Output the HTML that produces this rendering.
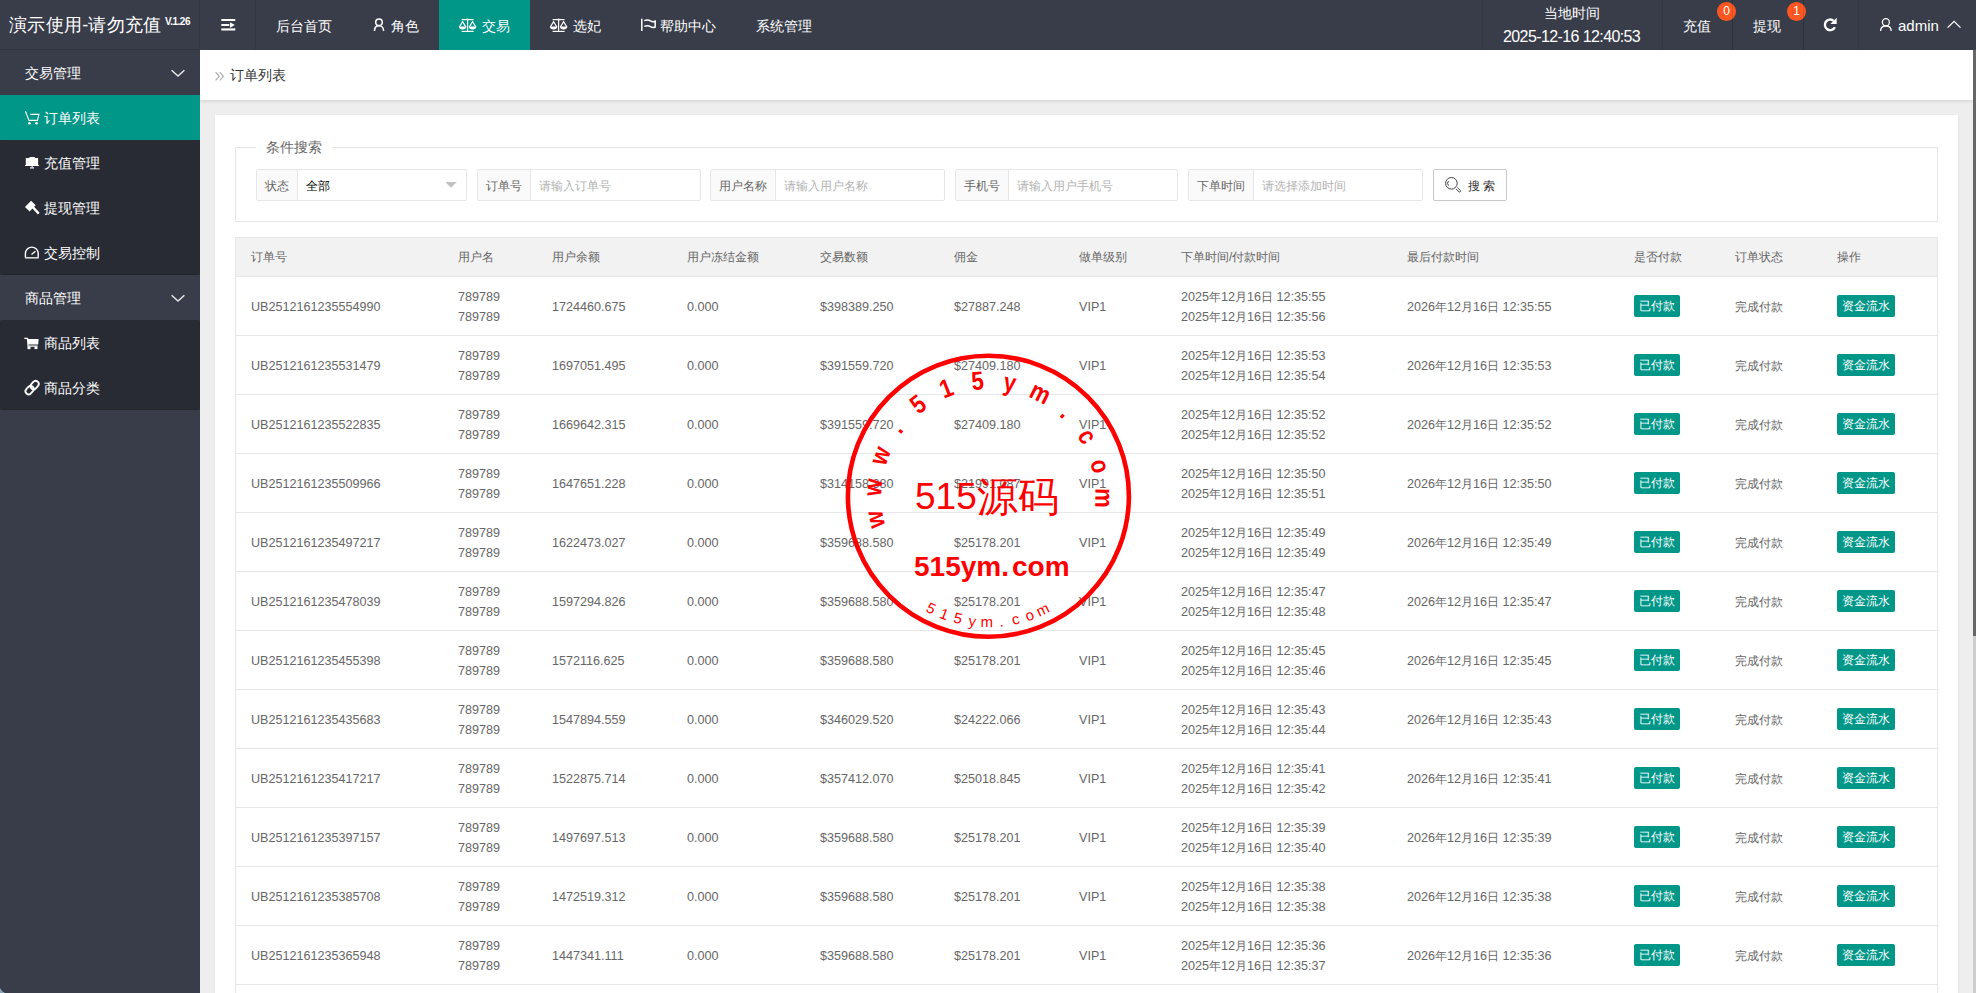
<!DOCTYPE html><html><head><meta charset="utf-8"><title>订单列表</title><style>*{margin:0;padding:0;box-sizing:border-box}
html,body{width:1976px;height:993px;overflow:hidden;background:#eeeeee;font-family:"Liberation Sans",sans-serif;color:#666}
.abs{position:absolute}
.hdr{position:absolute;left:0;top:0;width:1976px;height:50px;background:#393D49}
.logo-line{position:absolute;left:0;top:49px;width:200px;height:1px;background:#32363f}
.sep{position:absolute;top:0;width:1px;height:50px;background:#33373f}
.htxt{position:absolute;top:1px;line-height:50px;font-size:14px;color:#fff;white-space:nowrap}
.side{position:absolute;left:0;top:50px;width:200px;height:943px;background:#393D49}
.sub{position:absolute;left:0;width:200px;background:#282B33;border-radius:2px;box-shadow:inset 0 -1px 1px rgba(0,0,0,.08)}
.nav{position:absolute;left:0;width:200px;height:45px;line-height:45px;font-size:14px;color:#fff;white-space:nowrap}
.nav .t{position:absolute;left:44px;top:1px}
.nav.p .t{left:25px}
.main{position:absolute;left:200px;top:50px;width:1773px;height:943px;background:#eeeeee}
.crumb{position:absolute;left:200px;top:50px;width:1773px;height:50px;background:#fff;box-shadow:0 1px 4px rgba(0,0,0,.13)}
.card{position:absolute;left:215px;top:115px;width:1743px;height:900px;background:#fff;box-shadow:0 1px 3px 0 rgba(0,0,0,.07)}
.sbtrack{position:absolute;left:1973px;top:50px;width:3px;height:943px;background:#cccccc}
.sbthumb{position:absolute;left:1973px;top:50px;width:3px;height:586px;background:#666666}
.fs{position:absolute;left:235px;top:147px;width:1703px;height:75px;border:1px solid #e6e6e6}
.legend{position:absolute;left:256px;top:137px;padding:0 10px;background:#fff;font-size:14px;line-height:20px;color:#666}
.ig{position:absolute;top:169px;height:32px;border:1px solid #e6e6e6;border-radius:2px;background:#fff;font-size:12px;white-space:nowrap}
.ig .lb{position:absolute;left:0;top:0;height:30px;line-height:32px;padding:0 8px;background:#fafafa;border-right:1px solid #e6e6e6;color:#666}
.ig .ph{position:absolute;top:0;line-height:32px;color:#b3b3b3}
.btn{position:absolute;left:1433px;top:169px;width:74px;height:32px;border:1px solid #c9c9c9;border-radius:2px;background:#fff;font-size:12px;color:#555}
.tbl{position:static}
.thead{position:absolute;left:235px;top:237px;width:1703px;height:40px;background:#f2f2f2;border:1px solid #e6e6e6}
.th{position:absolute;top:0;line-height:38px;font-size:12px;color:#666;white-space:nowrap}
.tr{position:absolute;left:235px;width:1703px;height:59px;border:1px solid #e6e6e6;border-top:0;background:#fff}
.td{position:absolute;top:1px;line-height:58px;font-size:12px;color:#666;white-space:nowrap}
.td.n{font-size:12.6px}
.td.two{line-height:20px;top:10px}
.badge{position:absolute;top:18px;height:22px;line-height:22px;padding:0 5px;background:#009688;color:#fff;border-radius:2px;font-size:12px;white-space:nowrap}

.td i{font-style:normal;font-size:12px}
</style></head><body>
<div class="main"></div>
<div class="crumb"></div>
<svg class="abs" style="left:214px;top:70px" width="12" height="12" viewBox="214 70 12 12"><polyline points="215.6,72.2 219.2,76.3 215.6,80.4" fill="none" stroke="#aaa" stroke-width="1.1"/><polyline points="219.8,72.2 223.4,76.3 219.8,80.4" fill="none" stroke="#aaa" stroke-width="1.1"/></svg>
<div class="abs" style="left:230px;top:63px;line-height:24px;font-size:14px;color:#333">订单列表</div>
<div class="card"></div>
<div class="sbtrack"></div><div class="sbthumb"></div>

<div class="hdr"></div>
<div class="logo-line"></div>
<div class="sep" style="left:199px"></div>
<div class="sep" style="left:255px"></div>
<div class="htxt" style="left:9px;top:0;font-size:18px;letter-spacing:0.3px">演示使用-请勿充值</div>
<div class="htxt" style="left:165px;top:15.5px;line-height:12px;font-size:10px;font-weight:bold;letter-spacing:-0.5px">V.1.26</div>
<div class="abs" style="left:439px;top:0;width:91px;height:50px;background:#009688"></div>
<div class="htxt" style="left:276px">后台首页</div>
<div class="htxt" style="left:391px">角色</div>
<div class="htxt" style="left:482px">交易</div>
<div class="htxt" style="left:573px">选妃</div>
<div class="htxt" style="left:660px">帮助中心</div>
<div class="htxt" style="left:756px">系统管理</div>
<div class="sep" style="left:1482px"></div>
<div class="sep" style="left:1662px"></div>
<div class="sep" style="left:1732px"></div>
<div class="sep" style="left:1803px"></div>
<div class="sep" style="left:1858px"></div>
<div class="htxt" style="left:1544px;top:3px;line-height:20px">当地时间</div>
<div class="htxt" style="left:1503px;top:26.5px;line-height:20px;font-size:16px;letter-spacing:-0.6px">2025-12-16 12:40:53</div>
<div class="htxt" style="left:1683px">充值</div>
<div class="htxt" style="left:1753px">提现</div>
<div class="htxt" style="left:1898px;font-size:15px;top:1px">admin</div>

<div class="side"></div>
<div class="sub" style="top:95px;height:180px"></div>
<div class="sub" style="top:320px;height:90px"></div>
<div class="nav p" style="top:50px"><span class="t">交易管理</span></div>
<div class="nav" style="top:95px;background:#009688"><span class="t">订单列表</span></div>
<div class="nav" style="top:140px"><span class="t">充值管理</span></div>
<div class="nav" style="top:185px"><span class="t">提现管理</span></div>
<div class="nav" style="top:230px"><span class="t">交易控制</span></div>
<div class="nav p" style="top:275px"><span class="t">商品管理</span></div>
<div class="nav" style="top:320px"><span class="t">商品列表</span></div>
<div class="nav" style="top:365px"><span class="t">商品分类</span></div>

<div class="fs"></div>
<div class="legend">条件搜索</div>
<div class="ig" style="left:256px;width:211px"><span class="lb">状态</span><span class="ph" style="left:49px;color:#000">全部</span></div>
<div class="ig" style="left:477px;width:224px"><span class="lb">订单号</span><span class="ph" style="left:61px">请输入订单号</span></div>
<div class="ig" style="left:710px;width:235px"><span class="lb">用户名称</span><span class="ph" style="left:73px">请输入用户名称</span></div>
<div class="ig" style="left:955px;width:223px"><span class="lb">手机号</span><span class="ph" style="left:61px">请输入用户手机号</span></div>
<div class="ig" style="left:1188px;width:235px"><span class="lb">下单时间</span><span class="ph" style="left:73px">请选择添加时间</span></div>
<div class="btn"><span class="abs" style="left:34px;top:1px;line-height:30px;color:#333">搜 索</span></div>

<div class="tbl"><div class="thead"><span class="th" style="left:15px">订单号</span><span class="th" style="left:222px">用户名</span><span class="th" style="left:316px">用户余额</span><span class="th" style="left:451px">用户冻结金额</span><span class="th" style="left:584px">交易数额</span><span class="th" style="left:718px">佣金</span><span class="th" style="left:843px">做单级别</span><span class="th" style="left:945px">下单时间/付款时间</span><span class="th" style="left:1171px">最后付款时间</span><span class="th" style="left:1398px">是否付款</span><span class="th" style="left:1499px">订单状态</span><span class="th" style="left:1601px">操作</span></div><div class="tr" style="top:277px"><span class="td n" style="left:15px">UB2512161235554990</span><span class="td n two" style="left:222px">789789<br>789789</span><span class="td n" style="left:316px">1724460.675</span><span class="td n" style="left:451px">0.000</span><span class="td n" style="left:584px">$398389.250</span><span class="td n" style="left:718px">$27887.248</span><span class="td n" style="left:843px">VIP1</span><span class="td n two" style="left:945px">2025<i>年</i>12<i>月</i>16<i>日</i> 12:35:55<br>2025<i>年</i>12<i>月</i>16<i>日</i> 12:35:56</span><span class="td n" style="left:1171px">2026<i>年</i>12<i>月</i>16<i>日</i> 12:35:55</span><span class="badge" style="left:1398px">已付款</span><span class="td c" style="left:1499px">完成付款</span><span class="badge b2" style="left:1601px">资金流水</span></div><div class="tr" style="top:336px"><span class="td n" style="left:15px">UB2512161235531479</span><span class="td n two" style="left:222px">789789<br>789789</span><span class="td n" style="left:316px">1697051.495</span><span class="td n" style="left:451px">0.000</span><span class="td n" style="left:584px">$391559.720</span><span class="td n" style="left:718px">$27409.180</span><span class="td n" style="left:843px">VIP1</span><span class="td n two" style="left:945px">2025<i>年</i>12<i>月</i>16<i>日</i> 12:35:53<br>2025<i>年</i>12<i>月</i>16<i>日</i> 12:35:54</span><span class="td n" style="left:1171px">2026<i>年</i>12<i>月</i>16<i>日</i> 12:35:53</span><span class="badge" style="left:1398px">已付款</span><span class="td c" style="left:1499px">完成付款</span><span class="badge b2" style="left:1601px">资金流水</span></div><div class="tr" style="top:395px"><span class="td n" style="left:15px">UB2512161235522835</span><span class="td n two" style="left:222px">789789<br>789789</span><span class="td n" style="left:316px">1669642.315</span><span class="td n" style="left:451px">0.000</span><span class="td n" style="left:584px">$391559.720</span><span class="td n" style="left:718px">$27409.180</span><span class="td n" style="left:843px">VIP1</span><span class="td n two" style="left:945px">2025<i>年</i>12<i>月</i>16<i>日</i> 12:35:52<br>2025<i>年</i>12<i>月</i>16<i>日</i> 12:35:52</span><span class="td n" style="left:1171px">2026<i>年</i>12<i>月</i>16<i>日</i> 12:35:52</span><span class="badge" style="left:1398px">已付款</span><span class="td c" style="left:1499px">完成付款</span><span class="badge b2" style="left:1601px">资金流水</span></div><div class="tr" style="top:454px"><span class="td n" style="left:15px">UB2512161235509966</span><span class="td n two" style="left:222px">789789<br>789789</span><span class="td n" style="left:316px">1647651.228</span><span class="td n" style="left:451px">0.000</span><span class="td n" style="left:584px">$314158.380</span><span class="td n" style="left:718px">$21991.087</span><span class="td n" style="left:843px">VIP1</span><span class="td n two" style="left:945px">2025<i>年</i>12<i>月</i>16<i>日</i> 12:35:50<br>2025<i>年</i>12<i>月</i>16<i>日</i> 12:35:51</span><span class="td n" style="left:1171px">2026<i>年</i>12<i>月</i>16<i>日</i> 12:35:50</span><span class="badge" style="left:1398px">已付款</span><span class="td c" style="left:1499px">完成付款</span><span class="badge b2" style="left:1601px">资金流水</span></div><div class="tr" style="top:513px"><span class="td n" style="left:15px">UB2512161235497217</span><span class="td n two" style="left:222px">789789<br>789789</span><span class="td n" style="left:316px">1622473.027</span><span class="td n" style="left:451px">0.000</span><span class="td n" style="left:584px">$359688.580</span><span class="td n" style="left:718px">$25178.201</span><span class="td n" style="left:843px">VIP1</span><span class="td n two" style="left:945px">2025<i>年</i>12<i>月</i>16<i>日</i> 12:35:49<br>2025<i>年</i>12<i>月</i>16<i>日</i> 12:35:49</span><span class="td n" style="left:1171px">2026<i>年</i>12<i>月</i>16<i>日</i> 12:35:49</span><span class="badge" style="left:1398px">已付款</span><span class="td c" style="left:1499px">完成付款</span><span class="badge b2" style="left:1601px">资金流水</span></div><div class="tr" style="top:572px"><span class="td n" style="left:15px">UB2512161235478039</span><span class="td n two" style="left:222px">789789<br>789789</span><span class="td n" style="left:316px">1597294.826</span><span class="td n" style="left:451px">0.000</span><span class="td n" style="left:584px">$359688.580</span><span class="td n" style="left:718px">$25178.201</span><span class="td n" style="left:843px">VIP1</span><span class="td n two" style="left:945px">2025<i>年</i>12<i>月</i>16<i>日</i> 12:35:47<br>2025<i>年</i>12<i>月</i>16<i>日</i> 12:35:48</span><span class="td n" style="left:1171px">2026<i>年</i>12<i>月</i>16<i>日</i> 12:35:47</span><span class="badge" style="left:1398px">已付款</span><span class="td c" style="left:1499px">完成付款</span><span class="badge b2" style="left:1601px">资金流水</span></div><div class="tr" style="top:631px"><span class="td n" style="left:15px">UB2512161235455398</span><span class="td n two" style="left:222px">789789<br>789789</span><span class="td n" style="left:316px">1572116.625</span><span class="td n" style="left:451px">0.000</span><span class="td n" style="left:584px">$359688.580</span><span class="td n" style="left:718px">$25178.201</span><span class="td n" style="left:843px">VIP1</span><span class="td n two" style="left:945px">2025<i>年</i>12<i>月</i>16<i>日</i> 12:35:45<br>2025<i>年</i>12<i>月</i>16<i>日</i> 12:35:46</span><span class="td n" style="left:1171px">2026<i>年</i>12<i>月</i>16<i>日</i> 12:35:45</span><span class="badge" style="left:1398px">已付款</span><span class="td c" style="left:1499px">完成付款</span><span class="badge b2" style="left:1601px">资金流水</span></div><div class="tr" style="top:690px"><span class="td n" style="left:15px">UB2512161235435683</span><span class="td n two" style="left:222px">789789<br>789789</span><span class="td n" style="left:316px">1547894.559</span><span class="td n" style="left:451px">0.000</span><span class="td n" style="left:584px">$346029.520</span><span class="td n" style="left:718px">$24222.066</span><span class="td n" style="left:843px">VIP1</span><span class="td n two" style="left:945px">2025<i>年</i>12<i>月</i>16<i>日</i> 12:35:43<br>2025<i>年</i>12<i>月</i>16<i>日</i> 12:35:44</span><span class="td n" style="left:1171px">2026<i>年</i>12<i>月</i>16<i>日</i> 12:35:43</span><span class="badge" style="left:1398px">已付款</span><span class="td c" style="left:1499px">完成付款</span><span class="badge b2" style="left:1601px">资金流水</span></div><div class="tr" style="top:749px"><span class="td n" style="left:15px">UB2512161235417217</span><span class="td n two" style="left:222px">789789<br>789789</span><span class="td n" style="left:316px">1522875.714</span><span class="td n" style="left:451px">0.000</span><span class="td n" style="left:584px">$357412.070</span><span class="td n" style="left:718px">$25018.845</span><span class="td n" style="left:843px">VIP1</span><span class="td n two" style="left:945px">2025<i>年</i>12<i>月</i>16<i>日</i> 12:35:41<br>2025<i>年</i>12<i>月</i>16<i>日</i> 12:35:42</span><span class="td n" style="left:1171px">2026<i>年</i>12<i>月</i>16<i>日</i> 12:35:41</span><span class="badge" style="left:1398px">已付款</span><span class="td c" style="left:1499px">完成付款</span><span class="badge b2" style="left:1601px">资金流水</span></div><div class="tr" style="top:808px"><span class="td n" style="left:15px">UB2512161235397157</span><span class="td n two" style="left:222px">789789<br>789789</span><span class="td n" style="left:316px">1497697.513</span><span class="td n" style="left:451px">0.000</span><span class="td n" style="left:584px">$359688.580</span><span class="td n" style="left:718px">$25178.201</span><span class="td n" style="left:843px">VIP1</span><span class="td n two" style="left:945px">2025<i>年</i>12<i>月</i>16<i>日</i> 12:35:39<br>2025<i>年</i>12<i>月</i>16<i>日</i> 12:35:40</span><span class="td n" style="left:1171px">2026<i>年</i>12<i>月</i>16<i>日</i> 12:35:39</span><span class="badge" style="left:1398px">已付款</span><span class="td c" style="left:1499px">完成付款</span><span class="badge b2" style="left:1601px">资金流水</span></div><div class="tr" style="top:867px"><span class="td n" style="left:15px">UB2512161235385708</span><span class="td n two" style="left:222px">789789<br>789789</span><span class="td n" style="left:316px">1472519.312</span><span class="td n" style="left:451px">0.000</span><span class="td n" style="left:584px">$359688.580</span><span class="td n" style="left:718px">$25178.201</span><span class="td n" style="left:843px">VIP1</span><span class="td n two" style="left:945px">2025<i>年</i>12<i>月</i>16<i>日</i> 12:35:38<br>2025<i>年</i>12<i>月</i>16<i>日</i> 12:35:38</span><span class="td n" style="left:1171px">2026<i>年</i>12<i>月</i>16<i>日</i> 12:35:38</span><span class="badge" style="left:1398px">已付款</span><span class="td c" style="left:1499px">完成付款</span><span class="badge b2" style="left:1601px">资金流水</span></div><div class="tr" style="top:926px"><span class="td n" style="left:15px">UB2512161235365948</span><span class="td n two" style="left:222px">789789<br>789789</span><span class="td n" style="left:316px">1447341.111</span><span class="td n" style="left:451px">0.000</span><span class="td n" style="left:584px">$359688.580</span><span class="td n" style="left:718px">$25178.201</span><span class="td n" style="left:843px">VIP1</span><span class="td n two" style="left:945px">2025<i>年</i>12<i>月</i>16<i>日</i> 12:35:36<br>2025<i>年</i>12<i>月</i>16<i>日</i> 12:35:37</span><span class="td n" style="left:1171px">2026<i>年</i>12<i>月</i>16<i>日</i> 12:35:36</span><span class="badge" style="left:1398px">已付款</span><span class="td c" style="left:1499px">完成付款</span><span class="badge b2" style="left:1601px">资金流水</span></div><div class="tr" style="top:985px"><span class="td n" style="left:15px">UB2512161235346789</span><span class="td n two" style="left:222px">789789<br>789789</span><span class="td n" style="left:316px">1422162.910</span><span class="td n" style="left:451px">0.000</span><span class="td n" style="left:584px">$359688.580</span><span class="td n" style="left:718px">$25178.201</span><span class="td n" style="left:843px">VIP1</span><span class="td n two" style="left:945px">2025<i>年</i>12<i>月</i>16<i>日</i> 12:35:34<br>2025<i>年</i>12<i>月</i>16<i>日</i> 12:35:35</span><span class="td n" style="left:1171px">2026<i>年</i>12<i>月</i>16<i>日</i> 12:35:34</span><span class="badge" style="left:1398px">已付款</span><span class="td c" style="left:1499px">完成付款</span><span class="badge b2" style="left:1601px">资金流水</span></div></div>
<svg class="abs" style="left:0;top:0;pointer-events:none" width="1976" height="993" viewBox="0 0 1976 993">
<!-- hamburger -->
<g fill="#fff">
<rect x="221.3" y="19" width="14" height="2"/>
<rect x="221.3" y="24" width="8" height="2"/>
<polygon points="230,22.3 234.8,25 230,27.7"/>
<rect x="221.3" y="28.4" width="14" height="2.1"/>
</g>
<!-- user icon 角色 -->
<g fill="none" stroke="#fff" stroke-width="1.5">
<circle cx="379" cy="22.2" r="3.3"/>
<path d="M374.5 31 C374.5 27.6 376.6 25.8 379 25.8 C381.4 25.8 383.6 27.6 383.6 31"/>
</g>
<!-- scales 交易 -->
<g id="scale1" fill="none" stroke="#fff" stroke-width="1.2">
<line x1="461.6" y1="19.6" x2="473.6" y2="19.6"/>
<line x1="467.6" y1="19.6" x2="467.6" y2="31.4"/>
<line x1="461.6" y1="31.4" x2="473.6" y2="31.4"/>
<circle cx="467.6" cy="19.4" r="1" fill="#fff" stroke="none"/>
<path d="M459.3 27 L462.6 21.6 L465.9 27"/>
<path d="M469.3 27 L472.6 21.6 L475.9 27"/>
</g>
<g fill="#fff">
<path d="M458.8 26.6 H466.4 Q466 29.6 462.6 29.6 Q459.2 29.6 458.8 26.6Z"/>
<path d="M468.8 26.6 H476.4 Q476 29.6 472.6 29.6 Q469.2 29.6 468.8 26.6Z"/>
</g>
<!-- scales 选妃 (offset +91) -->
<g transform="translate(91,0)">
<g fill="none" stroke="#fff" stroke-width="1.2">
<line x1="461.6" y1="19.6" x2="473.6" y2="19.6"/>
<line x1="467.6" y1="19.6" x2="467.6" y2="31.4"/>
<line x1="461.6" y1="31.4" x2="473.6" y2="31.4"/>
<circle cx="467.6" cy="19.4" r="1" fill="#fff" stroke="none"/>
<path d="M459.3 27 L462.6 21.6 L465.9 27"/>
<path d="M469.3 27 L472.6 21.6 L475.9 27"/>
</g>
<g fill="#fff">
<path d="M458.8 26.6 H466.4 Q466 29.6 462.6 29.6 Q459.2 29.6 458.8 26.6Z"/>
<path d="M468.8 26.6 H476.4 Q476 29.6 472.6 29.6 Q469.2 29.6 468.8 26.6Z"/>
</g>
</g>
<!-- flag -->
<g fill="none" stroke="#fff" stroke-width="1.5">
<line x1="641.8" y1="18.8" x2="641.8" y2="31"/>
<path d="M644.3 20.6 C647 19.6 649 20 650.5 20.9 C652 21.8 653.5 21.9 655.2 21.2 V27 C653.5 27.7 652 27.6 650.5 26.7 C649 25.8 647 25.4 644.3 26.4"/>
</g>
<!-- refresh -->
<g>
<path d="M1834.9 27.2 A5.3 5.3 0 1 1 1833.6 20.8" fill="none" stroke="#fff" stroke-width="2.4"/>
<polygon points="1830.4,24.1 1836.7,24.1 1836.7,17.8" fill="#fff"/>
</g>
<!-- user icon admin -->
<g fill="none" stroke="#fff" stroke-width="1.3">
<circle cx="1885.9" cy="22.2" r="3.5"/>
<path d="M1880.6 31 C1880.6 27.8 1883 26 1885.9 26 C1888.8 26 1891.2 27.8 1891.2 31"/>
</g>
<!-- caret up -->
<polyline points="1947.6,27.6 1954.1,21.4 1960.5,27.6" fill="none" stroke="#fff" stroke-width="1.3"/>
<!-- sidebar chevrons -->
<polyline points="171.6,70.2 178,76 184.4,70.2" fill="none" stroke="#e8e8e8" stroke-width="1.5"/>
<polyline points="171.6,295.2 178,301 184.4,295.2" fill="none" stroke="#e8e8e8" stroke-width="1.5"/>
<!-- cart outline -->
<g fill="none" stroke="#fff" stroke-width="1.1">
<path d="M25.4 111.3 L29 120.4 H37.4 L38.9 114.4 H30.3"/>
</g>
<g fill="#fff"><circle cx="29.4" cy="123.2" r="1.3"/><circle cx="36.5" cy="123.2" r="1.3"/></g>
<!-- presentation board -->
<g fill="#fff">
<rect x="25.8" y="158" width="12.3" height="7.5"/>
<rect x="29.5" y="157" width="5.3" height="1.5"/>
<rect x="25" y="165" width="14" height="1"/>
<rect x="31.6" y="166" width="1" height="1.6"/>
<rect x="30" y="167.3" width="4" height="1.2"/>
</g>
<!-- gavel -->
<g fill="#fff">
<polygon points="25,207.1 31.1,200.8 35.6,205.3 29.6,211.4"/>
<polygon points="31.5,207.5 33.2,205.8 39.6,212.8 37.9,214.6"/>
</g>
<!-- gauge -->
<g fill="none" stroke="#fff" stroke-width="1.4">
<path d="M25.4 257.6 V253.5 A6.4 6.4 0 0 1 38.2 253.5 V257.6"/>
<line x1="31.5" y1="254.5" x2="35.4" y2="251.2"/>
</g>
<rect x="25" y="257" width="13.8" height="1.6" fill="#d8d8d8"/>
<!-- filled cart -->
<g fill="#fff">
<path d="M24.3 337.8 H27.7 L28.4 339 H38.6 L38.2 344.6 H28.6 L28.6 345.6 H37.6 V346.7 H27.5 L26.9 339 H24.3Z"/>
<rect x="27.5" y="346.5" width="3" height="2.6"/>
<rect x="34.5" y="346.5" width="3" height="2.6"/>
</g>
<!-- link -->
<g fill="none" stroke="#fff" stroke-width="1.8">
<rect x="25" y="387" width="9.2" height="6.2" rx="3.1" transform="rotate(-48 29.6 390.1)"/>
<rect x="30" y="382" width="9.2" height="6.2" rx="3.1" transform="rotate(-48 34.6 385.1)"/>
</g>
<!-- dropdown triangle -->
<polygon points="445.3,182.1 456.8,182.1 451,187.8" fill="#c2c2c2"/>
<!-- search icon -->
<g fill="none" stroke="#444" stroke-width="1">
<circle cx="1451.4" cy="183.3" r="5.8"/>
<path d="M1448.6 181 A3.2 3.2 0 0 0 1448.6 185.6"/>
<path d="M1456 188.9 L1459.4 192.3 L1460.8 190.9 L1457.4 187.5"/>
</g>
</svg>
<!-- badges -->
<div class="abs" style="left:1717px;top:1.5px;width:19px;height:19px;border-radius:50%;background:#FF5722;color:#fff;font-size:12px;line-height:19px;text-align:center">0</div>
<div class="abs" style="left:1787px;top:1.5px;width:19px;height:19px;border-radius:50%;background:#FF5722;color:#fff;font-size:12px;line-height:19px;text-align:center">1</div>
<div class="sep" style="left:1732px;background:rgba(0,0,0,.1)"></div>
<div class="sep" style="left:1803px;background:rgba(0,0,0,.1)"></div>
<svg class="abs" style="left:0;top:983px" width="10" height="10" viewBox="0 983 10 10"><path d="M0 985 A8 8 0 0 0 8 993 H0Z" fill="#8aa2b6"/><path d="M0 985 A8 8 0 0 0 8 993" fill="none" stroke="#2c2f38" stroke-width="0.8"/></svg>

<svg class="abs" style="left:0;top:0;pointer-events:none" width="1976" height="993" viewBox="0 0 1976 993">
<circle cx="988.4" cy="496.2" r="140.5" fill="none" stroke="#ff0000" stroke-width="4.6"/>
<text x="0" y="0" transform="translate(883.59 517.72) rotate(258.40) scale(0.85 1)" text-anchor="middle" font-family="Liberation Sans" font-weight="bold" font-size="26" fill="#ff0000">w</text>
<text x="0" y="0" transform="translate(881.72 487.91) rotate(274.44) scale(0.85 1)" text-anchor="middle" font-family="Liberation Sans" font-weight="bold" font-size="26" fill="#ff0000">w</text>
<text x="0" y="0" transform="translate(888.17 458.76) rotate(290.48) scale(0.85 1)" text-anchor="middle" font-family="Liberation Sans" font-weight="bold" font-size="26" fill="#ff0000">w</text>
<text x="0" y="0" transform="translate(902.42 432.52) rotate(306.52) scale(0.85 1)" text-anchor="middle" font-family="Liberation Sans" font-weight="bold" font-size="26" fill="#ff0000">.</text>
<text x="0" y="0" transform="translate(923.36 411.24) rotate(322.57) scale(0.85 1)" text-anchor="middle" font-family="Liberation Sans" font-weight="bold" font-size="26" fill="#ff0000">5</text>
<text x="0" y="0" transform="translate(949.37 396.57) rotate(338.61) scale(0.85 1)" text-anchor="middle" font-family="Liberation Sans" font-weight="bold" font-size="26" fill="#ff0000">1</text>
<text x="0" y="0" transform="translate(978.42 389.67) rotate(354.65) scale(0.85 1)" text-anchor="middle" font-family="Liberation Sans" font-weight="bold" font-size="26" fill="#ff0000">5</text>
<text x="0" y="0" transform="translate(1008.25 391.06) rotate(370.69) scale(0.85 1)" text-anchor="middle" font-family="Liberation Sans" font-weight="bold" font-size="26" fill="#ff0000">y</text>
<text x="0" y="0" transform="translate(1036.53 400.64) rotate(386.73) scale(0.85 1)" text-anchor="middle" font-family="Liberation Sans" font-weight="bold" font-size="26" fill="#ff0000">m</text>
<text x="0" y="0" transform="translate(1061.07 417.66) rotate(402.77) scale(0.85 1)" text-anchor="middle" font-family="Liberation Sans" font-weight="bold" font-size="26" fill="#ff0000">.</text>
<text x="0" y="0" transform="translate(1079.94 440.80) rotate(418.82) scale(0.85 1)" text-anchor="middle" font-family="Liberation Sans" font-weight="bold" font-size="26" fill="#ff0000">c</text>
<text x="0" y="0" transform="translate(1091.69 468.25) rotate(434.86) scale(0.85 1)" text-anchor="middle" font-family="Liberation Sans" font-weight="bold" font-size="26" fill="#ff0000">o</text>
<text x="0" y="0" transform="translate(1095.39 497.88) rotate(450.90) scale(0.85 1)" text-anchor="middle" font-family="Liberation Sans" font-weight="bold" font-size="26" fill="#ff0000">m</text>
<text x="0" y="0" transform="translate(928.72 612.82) rotate(27.10)" text-anchor="middle" font-family="Liberation Sans" font-size="15" fill="#ff0000">5</text>
<text x="0" y="0" transform="translate(942.50 618.89) rotate(20.51)" text-anchor="middle" font-family="Liberation Sans" font-size="15" fill="#ff0000">1</text>
<text x="0" y="0" transform="translate(956.87 623.35) rotate(13.92)" text-anchor="middle" font-family="Liberation Sans" font-size="15" fill="#ff0000">5</text>
<text x="0" y="0" transform="translate(971.67 626.13) rotate(7.34)" text-anchor="middle" font-family="Liberation Sans" font-size="15" fill="#ff0000">y</text>
<text x="0" y="0" transform="translate(986.69 627.19) rotate(0.75)" text-anchor="middle" font-family="Liberation Sans" font-size="15" fill="#ff0000">m</text>
<text x="0" y="0" transform="translate(1001.72 626.52) rotate(-5.84)" text-anchor="middle" font-family="Liberation Sans" font-size="15" fill="#ff0000">.</text>
<text x="0" y="0" transform="translate(1016.59 624.13) rotate(-12.42)" text-anchor="middle" font-family="Liberation Sans" font-size="15" fill="#ff0000">c</text>
<text x="0" y="0" transform="translate(1031.08 620.05) rotate(-19.01)" text-anchor="middle" font-family="Liberation Sans" font-size="15" fill="#ff0000">o</text>
<text x="0" y="0" transform="translate(1045.00 614.34) rotate(-25.60)" text-anchor="middle" font-family="Liberation Sans" font-size="15" fill="#ff0000">m</text>
<text x="915" y="509" font-family="Liberation Sans" font-size="37" fill="#ff0000">515<tspan font-size="41" dy="2">源码</tspan></text>
<text x="914" y="576" font-family="Liberation Sans" font-weight="bold" font-size="28" fill="#ff0000">515ym.<tspan dx="3">com</tspan></text>
</svg>
</body></html>
